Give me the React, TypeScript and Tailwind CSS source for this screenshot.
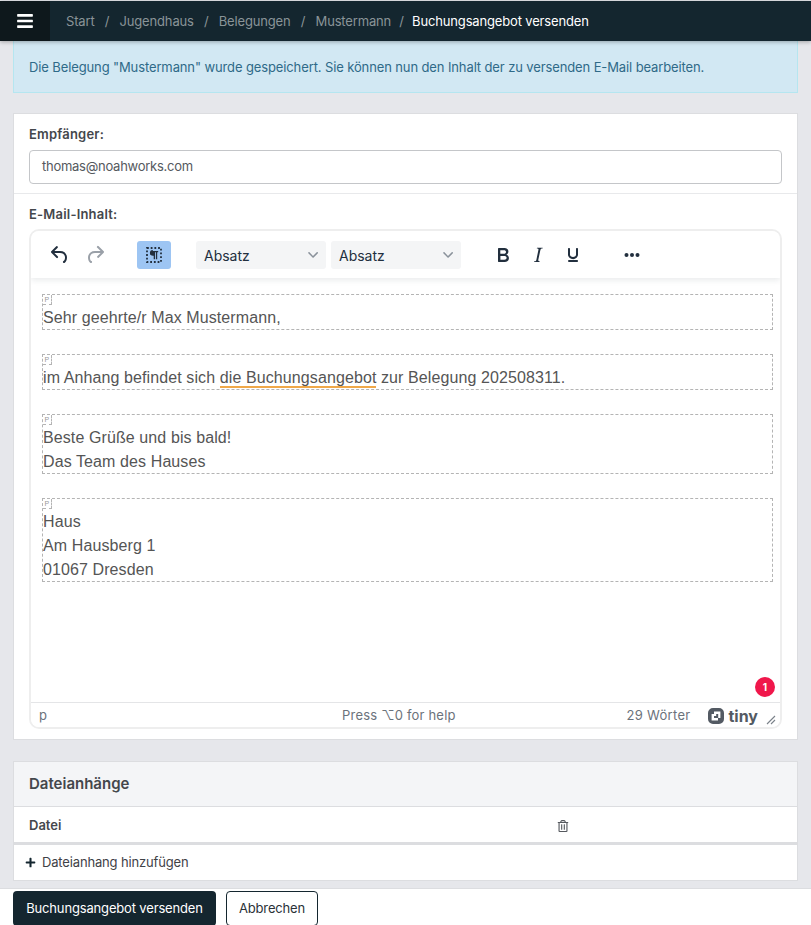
import React from 'react';
import { FaBars, FaPlus, FaRegTrashAlt } from 'react-icons/fa';

const crumbs = ['Start', 'Jugendhaus', 'Belegungen'];

function Icon({ d, className }: { d: string; className?: string }) {
  return (
    <svg viewBox="0 0 24 24" width="24" height="24" fill="currentColor" className={className}>
      <path d={d} />
    </svg>
  );
}

const icons = {
  undo: 'M6.4 8H12c3.7 0 6.2 2 6.8 5.1.6 2.7-.4 5.6-2.3 6.8a1 1 0 0 1-1-1.8c1.1-.6 1.8-2.7 1.4-4.6-.5-2.1-2.1-3.5-4.9-3.5H6.4l3.3 3.3a1 1 0 1 1-1.4 1.4l-5-5a1 1 0 0 1 0-1.4l5-5a1 1 0 0 1 1.4 1.4L6.4 8Z',
  redo: 'M17.6 10H12c-2.8 0-4.4 1.4-4.9 3.5-.4 2 .3 4 1.4 4.6a1 1 0 1 1-1 1.8c-2-1.2-2.9-4.1-2.3-6.8.6-3 3.1-5.1 6.8-5.1h5.6l-3.3-3.3a1 1 0 1 1 1.4-1.4l5 5a1 1 0 0 1 0 1.4l-5 5a1 1 0 0 1-1.4-1.4l3.3-3.3Z',
  bold: 'M7.8 19c-.3 0-.5 0-.6-.2l-.2-.5V5.7c0-.2 0-.4.2-.5l.6-.2h5c1.5 0 2.7.3 3.5 1 .7.6 1.1 1.4 1.1 2.5a3 3 0 0 1-.6 1.9c-.4.6-1 1-1.6 1.2.4.1.9.3 1.3.6s.8.7 1 1.2c.3.4.4 1 .4 1.6 0 1.3-.4 2.3-1.3 3-.8.7-2.1 1-3.8 1H7.8Zm5-8.3c.6 0 1.2-.1 1.6-.5.4-.3.6-.7.6-1.3 0-1.1-.8-1.7-2.3-1.7H9.3v3.5h3.4Zm.5 6c.7 0 1.3-.1 1.7-.4.4-.4.6-.9.6-1.5s-.2-1-.7-1.4c-.4-.3-1-.4-2-.4H9.4v3.8h4Z',
  italic: 'M16.7 4.7l-.1.9h-.3c-.6 0-1 0-1.4.3-.3.3-.4.6-.5 1.1l-2.1 9.8v.6c0 .5.4.8 1.2.8h.2l-.2.8H8l.2-.8h.2c1.1 0 1.8-.5 2-1.5l2-9.8.1-.5c0-.6-.4-.8-1.4-.8h-.3l.2-.9h5.8Z',
  underline: 'M16 5c.6 0 1 .4 1 1v5.5a4 4 0 0 1-.4 1.8l-1 1.4a5.3 5.3 0 0 1-5.5 1 5 5 0 0 1-1.6-1c-.5-.4-.8-.9-1.1-1.4a4 4 0 0 1-.4-1.8V6c0-.6.4-1 1-1s1 .4 1 1v5.5c0 .3 0 .6.2 1l.6.7a3.3 3.3 0 0 0 2.2.8 3.4 3.4 0 0 0 2.2-.8c.3-.2.4-.5.6-.8l.2-.9V6c0-.6.4-1 1-1ZM8 17h8c.6 0 1 .4 1 1s-.4 1-1 1H8a1 1 0 0 1 0-2Z',
};

function Select({ width }: { width: string }) {
  return (
    <div className={`flex h-7 items-center justify-between rounded-[3px] bg-[#f4f5f6] pl-2 pr-[8px] text-[14px] text-[#222f3e] ${width}`}>
      <span className="pt-px">Absatz</span>
      <svg viewBox="0 0 10 10" width="10" height="10" fill="#8a929b">
        <path d="M8.7 2.2c.3-.3.8-.3 1 0 .4.4.4.9 0 1.2l-4 4.1c-.3.4-.9.4-1.2 0l-4-4.1c-.4-.3-.4-.8 0-1.2.2-.3.7-.3 1 0L5 6l3.7-3.8Z" />
      </svg>
    </div>
  );
}

function Block({ children }: { children: React.ReactNode }) {
  return (
    <div className="relative border border-dashed border-[#b4b4b4] pt-[10px] leading-6">
      <span className="absolute left-0 top-0 flex h-[10px] w-[9px] items-center justify-center border-r border-b border-dashed border-[#b4b4b4] font-['Liberation_Sans',sans-serif] text-[7px] leading-none text-[#999]">
        P
      </span>
      <div className="translate-y-px">{children}</div>
    </div>
  );
}

export default function App() {
  return (
    <div className="flex h-[925px] w-[811px] flex-col overflow-hidden bg-[#e6e7eb] font-['Inter',sans-serif] tracking-[-0.01em] text-[#3f4247]">
      <header className="z-10 mt-px flex h-10 shrink-0 items-center bg-[#14262f] text-[13px] shadow-[0_1px_4px_rgba(0,0,0,0.3)]">
        <div className="flex h-full w-[50px] items-center justify-center bg-[#0e181c] text-white">
          <FaBars size={18} />
        </div>
        <nav className="ml-4 flex items-center pt-px text-[#8a9498]">
          {crumbs.map(c => (
            <React.Fragment key={c}>
              <span>{c}</span>
              <span className="mx-[7px] w-[11px] text-center">/</span>
            </React.Fragment>
          ))}
          <span>Mustermann</span>
          <span className="mx-[5px] w-[11px] text-center">/</span>
          <span className="text-white">Buchungsangebot versenden</span>
        </nav>
      </header>

      <div className="mx-[13px] flex h-[52px] shrink-0 items-center border border-t-0 border-[#b5e6f0] bg-[#d2e8f3] px-[15px] pt-[2px] text-[13px] tracking-[-0.009em] text-[#2f6a88]">
        Die Belegung "Mustermann" wurde gespeichert. Sie können nun den Inhalt der zu versenden E-Mail bearbeiten.
      </div>

      <section className="mx-[13px] mt-5 h-[627px] shrink-0 border border-[#dcdde0] bg-white">
        <div className="h-[80px] border-b border-[#e8e9eb] px-[15px] pt-[10px]">
          <label className="block text-[13px] font-semibold leading-[20px] tracking-[0.2px] text-[#44474c]">Empfänger:</label>
          <div className="mt-[6px] flex h-[34px] items-center rounded-[4px] border border-[#c4c6c9] px-3 text-[13px] tracking-[-0.02em] text-[#55595e]">
            thomas@noahworks.com
          </div>
        </div>
        <div className="px-[15px] pt-[10px]">
          <label className="block text-[13px] font-semibold leading-[20px] tracking-[0.2px] text-[#44474c]">E-Mail-Inhalt:</label>
          <div className="mt-[5px] flex h-[500px] flex-col overflow-hidden rounded-[10px] border-2 border-[#eeeeee] tracking-normal">
            <div className="z-10 flex h-[47px] shrink-0 items-center bg-white pl-[11px] shadow-[0_2px_6px_rgba(34,47,62,0.1)]">
              <div className="flex w-[81px]">
                <span className="flex h-7 w-[36px] items-center justify-center text-[#222f3e]"><Icon d={icons.undo} /></span>
                <span className="flex h-7 w-[34px] items-center justify-center text-[#9aa0a8]"><Icon d={icons.redo} /></span>
              </div>
              <span className="ml-[14px] flex h-7 w-[34px] items-center justify-center rounded-[3px] bg-[#9dc5f3] text-[#222f3e]">
                <svg viewBox="0 0 24 24" width="24" height="24" fill="currentColor">
                  <rect x="5" y="5" width="14" height="14" fill="none" stroke="currentColor" strokeWidth="1.8" strokeDasharray="1.8 1.9" />
                  <path d="M10.8 8h5.4v1.2h-1v7h-1.3v-7h-.9v7h-1.3v-3.4h-.9a2.9 2.9 0 0 1 0-5.8Z" />
                </svg>
              </span>
              <div className="ml-[25px] flex gap-[5px]">
                <Select width="w-[130px]" />
                <Select width="w-[130px]" />
              </div>
              <div className="ml-[24px] flex">
                <span className="flex h-7 w-[35px] items-center justify-center text-[#222f3e]"><Icon d={icons.bold} /></span>
                <span className="flex h-7 w-[35px] items-center justify-center text-[#222f3e]"><Icon d={icons.italic} /></span>
                <span className="flex h-7 w-[35px] items-center justify-center text-[#222f3e]"><Icon d={icons.underline} /></span>
              </div>
              <span className="ml-[25px] flex h-7 w-[34px] items-center justify-center text-[#222f3e]">
                <svg viewBox="0 0 24 24" width="24" height="24" fill="currentColor">
                  <circle cx="6.5" cy="12" r="2" />
                  <circle cx="12" cy="12" r="2" />
                  <circle cx="17.5" cy="12" r="2" />
                </svg>
              </span>
            </div>

            <div className="relative flex-1 pl-[11px] pr-[7px] pt-[16px] font-['Liberation_Sans',sans-serif] text-[16px] tracking-[0.1px] text-[#555555]">
              <div className="flex flex-col gap-[24px]">
                <Block>Sehr geehrte/r Max Mustermann,</Block>
                <Block>
                  im Anhang befindet sich{' '}
                  <span className="border-b-2 border-[#f0a848] leading-[20px]">die Buchungsangebot</span> zur Belegung 202508311.
                </Block>
                <Block>
                  Beste Grüße und bis bald!
                  <br />
                  Das Team des Hauses
                </Block>
                <Block>
                  Haus
                  <br />
                  Am Hausberg 1
                  <br />
                  01067 Dresden
                </Block>
              </div>
              <span className="absolute right-[5px] bottom-[5px] flex h-5 w-5 items-center justify-center rounded-full bg-[#f0174b] font-['Inter',sans-serif] text-[10px] font-bold text-white">
                1
              </span>
            </div>

            <div className="relative flex h-[25px] shrink-0 items-center border-t border-[#e4e5e7] bg-white pl-[8px] pr-[4px] pt-[1px] font-['Inter',sans-serif] text-[13px] tracking-[0.2px] text-[#6b727b]">
              <span>p</span>
              <span className="absolute left-[311px]">Press ⌥0 for help</span>
              <span className="ml-auto tracking-[0.3px]">29 Wörter</span>
              <svg viewBox="0 0 16 16" width="16" height="16" className="ml-[18px]" fill="#535a63">
                <path fillRule="evenodd" d="M5 0h6a5 5 0 0 1 5 5v6a5 5 0 0 1-5 5H5a5 5 0 0 1-5-5V5a5 5 0 0 1 5-5Zm1 3.5v2.6H3.6v6.4h6.4v-2.6h2.4V3.5H6Zm2.2 2.4h2v4.2H6v-2h2.2V5.9Z" />
              </svg>
              <span className="ml-[4px] text-[16px] font-bold leading-none tracking-normal text-[#535a63]">tiny</span>
              <svg viewBox="0 0 10 10" width="10" height="10" className="ml-[8px] mt-[8px]" stroke="#7b828a" strokeWidth="1.1" fill="none">
                <path d="M1 9 9 1M5 9l4-4" />
              </svg>
            </div>
          </div>
        </div>
      </section>

      <section className="mx-[13px] mt-[21px] h-[120px] shrink-0 border border-[#dcdde0] bg-white">
        <div className="flex h-[45px] items-center border-b border-[#dcdde0] bg-[#f4f5f7] px-[15px] text-[15px] font-semibold tracking-normal text-[#44474c]">
          Dateianhänge
        </div>
        <div className="flex h-[38px] items-center border-b-[3px] border-[#dcdde0] px-[15px] pt-[2px] text-[13px] font-semibold tracking-normal text-[#44474c]">
          <span className="w-[528px]">Datei</span>
          <FaRegTrashAlt size={12} className="text-[#55595e]" />
        </div>
        <div className="flex h-[35px] items-center gap-[6px] pl-[11px] text-[13px] text-[#3f4247]">
          <FaPlus size={11} className="text-[#14262f]" />
          <span>Dateianhang hinzufügen</span>
        </div>
      </section>

      <footer className="mt-[7px] flex flex-1 items-start gap-[10px] border-t border-[#dcdde0] bg-white pl-[13px] pt-[2px] text-[13px]">
        <button className="h-[35px] w-[203px] rounded-[4px] bg-[#14262f] text-white">Buchungsangebot versenden</button>
        <button className="h-[35px] w-[92px] rounded-[4px] border border-[#14262f] bg-white text-[#2b3238]">Abbrechen</button>
      </footer>
    </div>
  );
}
